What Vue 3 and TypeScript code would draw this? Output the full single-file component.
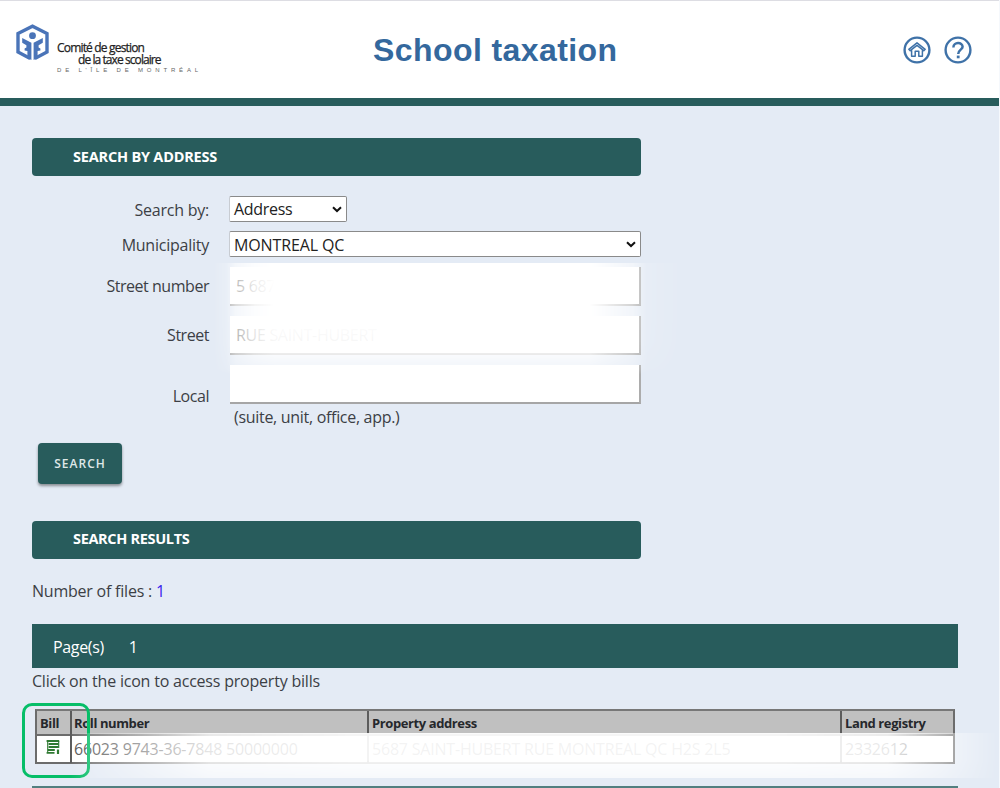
<script setup lang="ts">
import { ref } from 'vue'

interface Field {
  label: string
  value: string
}

interface ResultRow {
  roll: string
  address: string
  registry: string
}

const searchBy = ref('Address')
const municipality = ref('MONTREAL QC')
const fields = ref<Field[]>([
  { label: 'Street number', value: '5 687' },
  { label: 'Street', value: 'RUE SAINT-HUBERT' },
  { label: 'Local', value: '' },
])
const rows: ResultRow[] = [
  { roll: '66023 9743-36-7848 50000000', address: '5687 SAINT-HUBERT RUE MONTREAL QC H2S 2L5', registry: '2332612' },
]
</script>

<template>
  <div class="page">
    <header class="header">
      <div class="brand">
        <svg class="brand-mark" viewBox="0 0 33 37" width="33" height="37">
          <path fill="none" stroke="#4a74b8" stroke-width="3.4" d="M14.2 34.4 L2 28 V9.6 L16.5 2.2 L31 9.6 V28 L18.8 34.4" />
          <circle cx="16.5" cy="11.7" r="3.4" fill="#4a74b8" />
          <path fill="#4a74b8" d="M6.2 14 L15.4 18.8 V36 L11.4 34 V27 L8.6 26.4 V24.6 L10.4 23.4 V21.2 L6.2 18.8Z M26.8 14 L17.6 18.8 V36 L21.6 34 V27 L24.4 26.4 V24.6 L22.6 23.4 V21.2 L26.8 18.8Z" />
        </svg>
        <div class="brand-text">
          <span class="brand-one">Comité de gestion</span>
          <span class="brand-two">de la taxe scolaire</span>
          <span class="brand-three">DE L'ÎLE DE MONTRÉAL</span>
        </div>
      </div>
      <h1 class="title">School taxation</h1>
      <nav class="tools">
        <svg viewBox="0 0 28 28" width="28" height="28" fill="none" stroke="#3f72a8">
          <circle cx="14" cy="14" r="12.4" stroke-width="2.4" />
          <path stroke-width="1.5" stroke-linejoin="round" d="M5.8 13.3 L14 6.8 L22.2 13.3 L20.8 14.7 L14 9.4 L7.2 14.7Z M8.6 14.2 V20.3 H12.2 V15.3 H15.8 V20.3 H19.4 V14.2" />
        </svg>
        <svg viewBox="0 0 28 28" width="28" height="28" fill="none" stroke="#3f72a8">
          <circle cx="14" cy="14" r="12.4" stroke-width="2.4" />
          <path stroke-width="2.5" d="M9.4 11.5 C9.4 5.7 18.6 5.7 18.6 10.8 C18.6 13.8 14.2 13.6 14.2 18" />
          <path stroke-width="2.8" d="M14.2 19.6 V22.3" />
        </svg>
      </nav>
    </header>

    <main class="content">
      <h2 class="section sec-one">SEARCH BY ADDRESS</h2>

      <form class="form" @submit.prevent>
        <div class="row row-select">
          <span class="label">Search by:</span>
          <div class="select select-short">
            <span class="addr">{{ searchBy }}</span>
            <svg viewBox="0 0 10 7" width="10" height="7"><path d="M1 1.2 L5 5 L9 1.2" fill="none" stroke="#111" stroke-width="2" /></svg>
          </div>
        </div>
        <div class="row row-select">
          <span class="label">Municipality</span>
          <div class="select">
            <span class="muni">{{ municipality }}</span>
            <svg viewBox="0 0 10 7" width="10" height="7"><path d="M1 1.2 L5 5 L9 1.2" fill="none" stroke="#111" stroke-width="2" /></svg>
          </div>
        </div>
        <div class="inputs">
          <div v-for="f in fields" :key="f.label" class="row row-input">
            <span class="label tight" :class="{ low: f.label === 'Local' }">{{ f.label }}</span>
            <div class="input">{{ f.value }}</div>
          </div>
          <div class="veil veil-form"></div>
        </div>
        <div class="hint">(suite, unit, office, app.)</div>
        <button class="search">SEARCH</button>
      </form>

      <h2 class="section sec-two">SEARCH RESULTS</h2>
      <p class="count">Number of files : <span class="num">1</span></p>
      <div class="pager"><span>Page(s)</span><span>1</span></div>
      <p class="note">Click on the icon to access property bills</p>

      <div class="results">
        <div class="table">
          <div class="tr head">
            <span>Bill</span><span>Roll number</span><span>Property address</span><span>Land registry</span>
          </div>
          <div v-for="r in rows" :key="r.roll" class="tr">
            <span class="bill">
              <svg viewBox="0 0 14 14" width="14" height="14" fill="none" stroke="#2f7a32">
                <path stroke-width="1.8" d="M.6 1 H13.2 M2.6 4 H12.7 M2.6 7 H12.7 M2 10 H8.8 M.6 12.8 H8.5" />
                <path stroke-width="1.1" d="M1.7 1 V12 M12.7 1 V8" />
                <path stroke-width="2.2" d="M12 9.5 V14" />
              </svg>
            </span>
            <span class="roll">{{ r.roll }}</span><span class="paddr">{{ r.address }}</span><span class="reg">{{ r.registry }}</span>
          </div>
        </div>
        <div class="marker"></div>
        <div class="veil veil-table"></div>
      </div>
      <div class="footbar"></div>
    </main>
  </div>
</template>

<style>
body {
  margin: 0;
  overflow: hidden;
}
</style>

<style scoped>
.page {
  box-sizing: border-box;
  width: 1000px;
  height: 788px;
  overflow: hidden;
  background: #e4ebf5;
  border-right: 1px solid #f5f8fc;
  color: #3c3f45;
  font: 16px/22px "Open Sans", "Noto Sans", sans-serif;
}
.header {
  box-sizing: border-box;
  display: grid;
  grid-template-columns: 373px 1fr auto;
  height: 106px;
  border-top: 1px solid #dddde3;
  border-bottom: 8px solid #285c5c;
  background: #fff;
}
.brand {
  display: flex;
  padding: 23px 0 0 16px;
}
.brand-mark {
  flex: none;
}
.brand-text {
  display: flex;
  flex-direction: column;
  padding: 18px 0 0 8px;
  color: #222;
  font-size: 12px;
  line-height: 12px;
  white-space: nowrap;
}
.brand-one,
.brand-two {
  -webkit-text-stroke: 0.25px #222;
}
.brand-one {
  letter-spacing: -0.82px;
}
.brand-two {
  padding-left: 21px;
  letter-spacing: -0.92px;
}
.brand-three {
  color: #666;
  font: 6px/9px "Liberation Sans", sans-serif;
  letter-spacing: 3.82px;
}
.title {
  margin: 0;
  padding-top: 30px;
  color: #34689d;
  font: bold 32px/38px "Liberation Sans", sans-serif;
  letter-spacing: 0.42px;
}
.tools {
  display: flex;
  gap: 13px;
  padding: 35px 27px 0 0;
}
.content {
  padding: 32px 41px 0 32px;
}
.section {
  width: 609px;
  height: 38px;
  box-sizing: border-box;
  margin: 0;
  padding-left: 41px;
  border-radius: 4px;
  background: #285c5c;
  color: #fff;
  font-size: 14.5px;
  font-weight: 700;
  line-height: 38px;
}
.sec-one {
  letter-spacing: -0.2px;
}
.sec-two {
  letter-spacing: -0.33px;
  line-height: 36px;
}
.form {
  width: 609px;
  padding-top: 20px;
}
.row {
  display: grid;
  grid-template-columns: 177px 1fr;
  column-gap: 20px;
}
.row-select {
  height: 26px;
  margin-bottom: 9px;
  line-height: 28px;
}
.label {
  text-align: right;
  letter-spacing: -0.24px;
}
.label.tight {
  letter-spacing: -0.46px;
}
.select {
  box-sizing: border-box;
  display: flex;
  align-items: center;
  justify-content: space-between;
  height: 26px;
  padding: 0 4px;
  border: 1px solid #8a8a8a;
  border-left-color: #c8ccd2;
  border-radius: 2px;
  background: #fff;
  color: #222;
}
.addr {
  letter-spacing: -0.3px;
}
.muni {
  padding-top: 1px;
  letter-spacing: -0.12px;
}
.select-short {
  width: 118px;
}
.inputs {
  position: relative;
  display: flex;
  flex-direction: column;
  gap: 10px;
  padding-top: 1px;
}
.row-input {
  height: 39px;
  line-height: 39px;
}
.low {
  padding-top: 12px;
}
.input {
  box-sizing: border-box;
  height: 39px;
  margin-left: 1px;
  padding-left: 6px;
  border-right: 2px solid #acacac;
  border-bottom: 2px solid #a6a6a6;
  background: #fff;
  color: #555;
  letter-spacing: -0.3px;
  white-space: pre;
}
.veil {
  position: absolute;
  background: #fff;
  mask-composite: intersect;
}
.veil-form {
  left: 180px;
  top: -3px;
  width: 478px;
  height: 112px;
  mask-image:
    linear-gradient(90deg, transparent, rgba(0, 0, 0, 0.2) 3%, rgba(0, 0, 0, 0.6) 5%, rgba(0, 0, 0, 0.88) 9%, #000 13%, #000 79%, rgba(0, 0, 0, 0.5) 88%, rgba(0, 0, 0, 0.12) 91%, transparent),
    linear-gradient(180deg, #000 0, #000 50%, rgba(0, 0, 0, 0.95) 70%, rgba(0, 0, 0, 0.75) 83%, rgba(0, 0, 0, 0.5) 94%, transparent);
}
.hint {
  padding: 2px 0 0 202px;
  letter-spacing: -0.3px;
}
.search {
  display: block;
  width: 84px;
  height: 41px;
  margin: 15px 0 37px 6px;
  padding: 0;
  border: 0;
  border-radius: 4px;
  background: #285c5c;
  box-shadow: 0 2px 3px rgba(0, 0, 0, 0.4);
  color: #dfe8e8;
  font: 600 12px/41px "Open Sans", sans-serif;
  letter-spacing: 1px;
}
.count {
  margin: 21px 0 22px;
  letter-spacing: -0.22px;
}
.num {
  color: #3a22ee;
}
.pager {
  box-sizing: border-box;
  display: flex;
  gap: 25px;
  height: 44px;
  padding-left: 21px;
  background: #285c5c;
  color: #fff;
  line-height: 46px;
  letter-spacing: -0.35px;
}
.note {
  margin: 2px 0 17px;
  letter-spacing: -0.21px;
}
.results {
  position: relative;
  padding-left: 3px;
}
.table {
  box-sizing: border-box;
  width: 920px;
  border: 2px solid #6c6c6c;
  border-top-color: #777;
  background: #fff;
}
.tr {
  display: grid;
  grid-template-columns: 35px 297px 473px 1fr;
  height: 26px;
  line-height: 27px;
  color: #555;
  white-space: nowrap;
}
.tr > span {
  padding-left: 3px;
}
.tr > span + span {
  margin-left: -2px;
  border-left: 2px solid #5c5c5c;
}
.tr > span:nth-child(2) {
  padding-left: 2px;
}
.tr.head {
  height: 23px;
  border-bottom: 2px solid #6c6c6c;
  background: #c0c0c0;
  color: #26282c;
  font-size: 13px;
  font-weight: 700;
  line-height: 25px;
  letter-spacing: -0.4px;
}
.tr > .bill {
  padding: 4px 0 0 9px;
  line-height: 0;
}
.tr > .roll,
.tr > .paddr,
.tr > .reg {
  letter-spacing: -0.2px;
}
.marker {
  position: absolute;
  left: -10px;
  top: -6px;
  box-sizing: border-box;
  width: 68px;
  height: 75px;
  border: 3px solid #06be68;
  border-radius: 10px;
}
.veil-table {
  left: 38px;
  top: 24px;
  width: 929px;
  height: 45px;
  mask-image:
    linear-gradient(90deg, transparent, rgba(0, 0, 0, 0.22) 2.5%, rgba(0, 0, 0, 0.5) 8%, rgba(0, 0, 0, 0.85) 15%, rgba(0, 0, 0, 0.93) 30%, rgba(0, 0, 0, 0.93) 76%, rgba(0, 0, 0, 0.87) 88%, rgba(0, 0, 0, 0.5) 94%, transparent),
    linear-gradient(180deg, #000, #000 60%, rgba(0, 0, 0, 0.75));
}
.footbar {
  height: 20px;
  margin-top: 22px;
  background: #527f80;
}
</style>
